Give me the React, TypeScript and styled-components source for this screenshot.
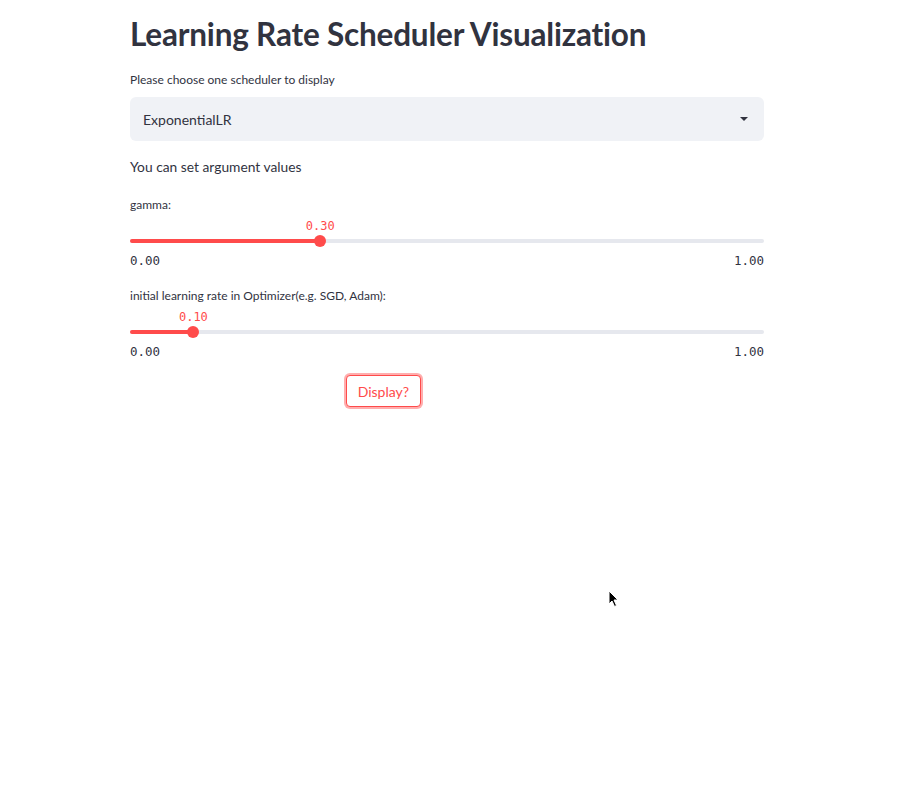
import React from 'react';
import styled, { createGlobalStyle } from 'styled-components';

const GlobalStyle = createGlobalStyle`
  html, body {
    margin: 0;
    padding: 0;
    background: #ffffff;
  }
  body {
    font-family: 'Lato', 'Noto Sans', sans-serif;
    color: #31333f;
  }
`;

type SliderProps = {
  label: string;
  value: number;
  min: number;
  max: number;
};

const Slider: React.FC<SliderProps> = ({ label, value, min, max }) => {
  const pct = ((value - min) / (max - min)) * 100;
  return (
    <SliderBlock>
      <WidgetLabel>{label}</WidgetLabel>
      <TrackArea>
        <Track>
          <Filled style={{ width: `${pct}%` }} />
          <Thumb style={{ left: `${pct}%` }}>
            <ThumbValue>{value.toFixed(2)}</ThumbValue>
          </Thumb>
        </Track>
      </TrackArea>
      <TickRow>
        <span>{min.toFixed(2)}</span>
        <span>{max.toFixed(2)}</span>
      </TickRow>
    </SliderBlock>
  );
};

const App: React.FC = () => (
  <>
    <GlobalStyle />
    <Page>
      <Main>
        <Title>Learning Rate Scheduler Visualization</Title>
        <SelectBlock>
          <WidgetLabel>Please choose one scheduler to display</WidgetLabel>
          <SelectBox>
            <span>ExponentialLR</span>
            <Caret viewBox="0 0 8 4">
              <path d="M0 0 L8 0 L4 4 Z" fill="#31333f" />
            </Caret>
          </SelectBox>
        </SelectBlock>
        <Text>You can set argument values</Text>
        <Slider label="gamma:" value={0.3} min={0} max={1} />
        <Slider label="initial learning rate in Optimizer(e.g. SGD, Adam):" value={0.1} min={0} max={1} />
        <Columns>
          <div />
          <div>
            <Button>Display?</Button>
          </div>
          <div />
        </Columns>
      </Main>
      <Cursor viewBox="0 0 12 18" width="12" height="18">
        <path
          d="M1 1 L1 14 L4 11 L6.5 16.5 L8.5 15.5 L6 10 L10 10 Z"
          fill="#000"
          stroke="#fff"
          strokeWidth="1"
          strokeLinejoin="round"
        />
      </Cursor>
    </Page>
  </>
);

const Page = styled.div`
  position: relative;
  width: 921px;
  height: 792px;
  overflow: hidden;
`;

const Main = styled.div`
  width: 634px;
  margin-left: 130px;
  display: flex;
  flex-direction: column;
`;

const Title = styled.h1`
  margin: 14px 0 0;
  font-size: 31.5px;
  font-weight: 700;
  line-height: 40px;
  color: #31333f;
  letter-spacing: -0.2px;
`;

const SelectBlock = styled.div`
  margin-top: 18px;
  display: flex;
  flex-direction: column;
`;

const WidgetLabel = styled.div`
  font-size: 12px;
  line-height: 16px;
  color: #31333f;
  margin-bottom: 9px;
`;

const SelectBox = styled.div`
  height: 44px;
  box-sizing: border-box;
  background: #f0f2f6;
  border-radius: 6px;
  display: flex;
  align-items: center;
  justify-content: space-between;
  padding: 0 16px 0 13px;
  font-size: 14px;
`;

const Caret = styled.svg`
  width: 8px;
  height: 4px;
`;

const Text = styled.p`
  margin: 17px 0 0;
  font-size: 13.8px;
  line-height: 18px;
`;

const SliderBlock = styled.div`
  margin-top: 21px;
  display: flex;
  flex-direction: column;

  & + & {
    margin-top: 20px;
  }
`;

const TrackArea = styled.div`
  padding-top: 17px;
  height: 4px;
  padding-bottom: 8px;
`;

const Track = styled.div`
  position: relative;
  height: 4px;
  border-radius: 2px;
  background: #e6e8ee;
`;

const Filled = styled.div`
  height: 4px;
  border-radius: 2px;
  background: #ff4b4b;
`;

const Thumb = styled.div`
  position: absolute;
  top: -4px;
  width: 12px;
  height: 12px;
  margin-left: -6px;
  border-radius: 50%;
  background: #ff4b4b;
`;

const ThumbValue = styled.div`
  position: absolute;
  bottom: 14px;
  left: 50%;
  transform: translateX(-50%);
  font-family: 'DejaVu Sans Mono', 'Liberation Mono', monospace;
  font-size: 12px;
  line-height: 14px;
  color: #ff4b4b;
  white-space: nowrap;
`;

const TickRow = styled.div`
  display: flex;
  justify-content: space-between;
  font-family: 'DejaVu Sans Mono', 'Liberation Mono', monospace;
  font-size: 12.5px;
  line-height: 14px;
  color: #31333f;
  margin-top: 3px;
`;

const Columns = styled.div`
  margin-top: 16px;
  display: grid;
  grid-template-columns: 1fr 1fr 1fr;
  column-gap: 16px;
`;

const Button = styled.button`
  font-family: 'Lato', 'Noto Sans', sans-serif;
  font-size: 14px;
  color: #ff4b4b;
  background: #ffffff;
  border: 1px solid #ff4b4b;
  border-radius: 4px;
  padding: 0 11px;
  height: 32px;
  box-shadow: 0 0 0 2px rgba(255, 75, 75, 0.45);
  margin-left: -1px;
  cursor: pointer;
`;

const Cursor = styled.svg`
  position: absolute;
  left: 608px;
  top: 590px;
`;

export default App;
